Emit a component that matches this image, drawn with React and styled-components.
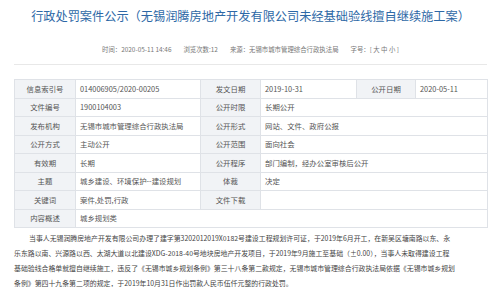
import React from 'react'
import styled, { createGlobalStyle } from 'styled-components'

const GlobalStyle = createGlobalStyle`
  body {
    margin: 0;
    background: #fff;
    font-family: "Noto Sans CJK SC", "Noto Sans", sans-serif;
  }
`

const Page = styled.div`
  width: 499px;
  height: 287px;
  overflow: hidden;
  padding: 7px 12px 0 14px;
  box-sizing: border-box;
`

const Title = styled.h1`
  margin: 0;
  text-align: center;
  font-size: 12.2px;
  line-height: 18px;
  font-weight: 400;
  color: #2d68a6;
  white-space: nowrap;
`

const Meta = styled.div`
  margin-top: 20px;
  display: flex;
  justify-content: center;
  gap: 12px;
  font-size: 6.4px;
  line-height: 9px;
  color: #777;
  padding-bottom: 10px;
  border-bottom: 1px solid #e8e8e8;
`

const Table = styled.table`
  margin-top: 14px;
  width: 473px;
  border-collapse: collapse;
  table-layout: fixed;
  font-size: 7.4px;
  color: #555;
`

const Col = styled.col`
  width: ${p => p.$w}px;
`

const Cell = styled.td`
  height: 17.5px;
  padding: 0 4px;
  line-height: 10px;
  border: 1px solid #dfe2e7;
  background: ${p => (p.$label ? '#f1f3f6' : '#fff')};
  text-align: ${p => (p.$label ? 'center' : 'left')};
  white-space: nowrap;
  overflow: hidden;
`

const Body = styled.div`
  margin-top: 3px;
  width: 473px;
  font-size: 6.9px;
  line-height: 15px;
  color: #444;
`

const Line = styled.div`
  white-space: nowrap;
  padding-left: ${p => (p.$indent ? '15px' : '0')};
`

const widths = [61, 125, 60, 96, 59, 72]

// each row: pairs of [label, value, colSpan of value]
const rows = [
  [['信息索引号', '014006905/2020-00205', 1], ['发文日期', '2019-10-31', 1], ['公开日期', '2020-05-11', 1]],
  [['文件编号', '1900104003', 1], ['公开时限', '长期公开', 3]],
  [['发布机构', '无锡市城市管理综合行政执法局', 1], ['公开形式', '网站、文件、政府公报', 3]],
  [['公开方式', '主动公开', 1], ['公开范围', '面向社会', 3]],
  [['有效期', '长期', 1], ['公开程序', '部门编制，经办公室审核后公开', 3]],
  [['主题', '城乡建设、环境保护--建设规划', 1], ['体裁', '决定', 3]],
  [['关键词', '案件,处罚,行政', 1], ['文件下载', '', 3]],
  [['内容概述', '城乡规划类', 5]],
]

const lines = [
  '当事人无锡润腾房地产开发有限公司办理了建字第3202012019X0182号建设工程规划许可证，于2019年6月开工，在新吴区塘南路以东、永',
  '乐东路以南、兴源路以西、太湖大道以北建设XDG-2018-40号地块房地产开发项目，于2019年9月施工至基础（±0.00），当事人未取得建设工程',
  '基础验线合格单就擅自继续施工，违反了《无锡市城乡规划条例》第三十八条第二款规定，无锡市城市管理综合行政执法局依据《无锡市城乡规划',
  '条例》第四十九条第二项的规定，于2019年10月31日作出罚款人民币伍仟元整的行政处罚。',
]

export default function App() {
  return (
    <Page>
      <GlobalStyle />
      <Title>行政处罚案件公示（无锡润腾房地产开发有限公司未经基础验线擅自继续施工案）</Title>
      <Meta>
        <span>时间：2020-05-11 14:46</span>
        <span>浏览次数:12</span>
        <span>来源：无锡市城市管理综合行政执法局</span>
        <span>字号：[ 大 中 小 ]</span>
      </Meta>
      <Table>
        <colgroup>
          {widths.map((w, i) => <Col key={i} $w={w} />)}
        </colgroup>
        <tbody>
          {rows.map((r, i) => (
            <tr key={i}>
              {r.map(([label, value, span], j) => (
                <React.Fragment key={j}>
                  <Cell $label>{label}</Cell>
                  <Cell colSpan={span}>{value}</Cell>
                </React.Fragment>
              ))}
            </tr>
          ))}
        </tbody>
      </Table>
      <Body>
        {lines.map((t, i) => <Line key={i} $indent={i === 0}>{t}</Line>)}
      </Body>
    </Page>
  )
}
